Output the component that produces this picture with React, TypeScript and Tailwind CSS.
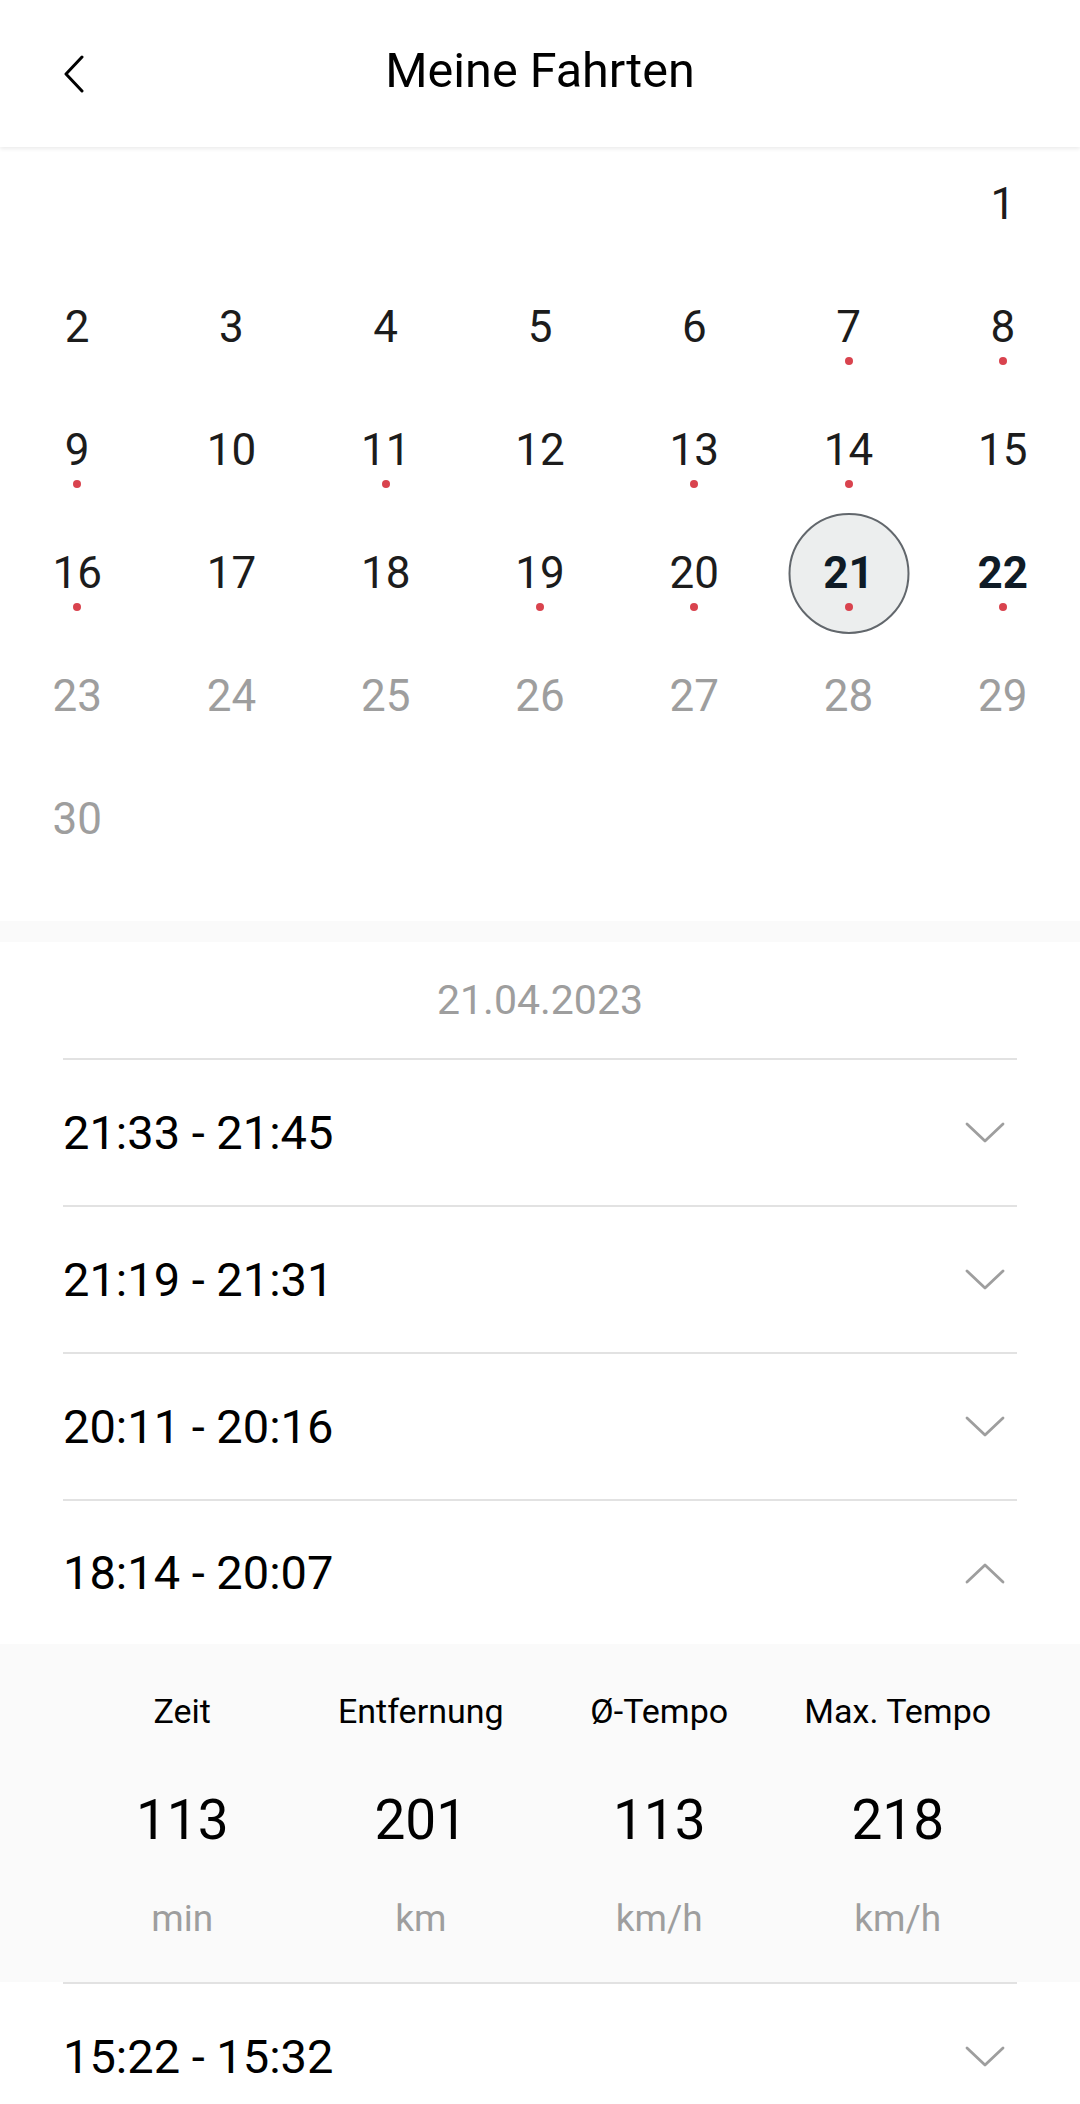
import React from 'react';

type Day = {
  n: number;
  dot?: boolean;
  muted?: boolean;
  bold?: boolean;
  selected?: boolean;
};

const dotted = [7, 8, 9, 11, 13, 14, 16, 19, 20, 21, 22];

const days: (Day | null)[] = [
  null, null, null, null, null, null,
  ...Array.from({ length: 30 }, (_, i) => {
    const n = i + 1;
    return {
      n,
      dot: dotted.includes(n),
      muted: n >= 23,
      bold: n === 21 || n === 22,
      selected: n === 21,
    };
  }),
];

const trips = ['21:33 - 21:45', '21:19 - 21:31', '20:11 - 20:16'];

const stats = [
  { label: 'Zeit', value: '113', unit: 'min' },
  { label: 'Entfernung', value: '201', unit: 'km' },
  { label: 'Ø-Tempo', value: '113', unit: 'km/h' },
  { label: 'Max. Tempo', value: '218', unit: 'km/h' },
];

const Chevron = ({ up = false }: { up?: boolean }) => (
  <svg width="40" height="22" viewBox="0 0 40 22" fill="none" className="shrink-0 mr-[12px]">
    <path
      d={up ? 'M2 20 L20 3 L38 20' : 'M2 2 L20 19 L38 2'}
      stroke="#9e9e9e"
      strokeWidth="2.8"
      strokeLinecap="round"
      strokeLinejoin="round"
    />
  </svg>
);

const TripRow = ({ time, open = false }: { time: string; open?: boolean }) => (
  <div className="mx-[63px] border-t-2 border-[#e2e2e2]">
    <div className={`flex items-center justify-between ${open ? 'h-[143px]' : 'h-[145px]'}`}>
      <span className="text-[47px] text-black leading-none">{time}</span>
      <Chevron up={open} />
    </div>
  </div>
);

export default function App() {
  return (
    <div className="w-[1080px] min-h-[2104px] bg-white overflow-hidden" style={{ fontFamily: 'Roboto, "Noto Sans", sans-serif' }}>
      {/* Header */}
      <header className="relative z-10 h-[147px] grid grid-cols-[1fr_auto_1fr] items-center bg-white shadow-[0_2px_4px_rgba(0,0,0,0.08)]">
        <div className="pl-[62px] flex items-center">
          <svg width="24" height="38" viewBox="0 0 24 38" fill="none">
            <path d="M20 2 L4 19 L20 36" stroke="#000" strokeWidth="3" strokeLinecap="round" strokeLinejoin="round" />
          </svg>
        </div>
        <h1 className="text-[48.5px] text-black leading-none pb-[4px]">Meine Fahrten</h1>
        <div />
      </header>

      {/* Calendar */}
      <div className="grid grid-cols-7 pb-[36px]">
        {days.map((d, i) => (
          <div key={i} className="relative h-[123px] flex flex-col items-center">
            {d && (
              <>
                {d.selected && (
                  <div className="absolute top-[-3px] left-1/2 -translate-x-1/2 w-[121px] h-[121px] rounded-full bg-[#eceeee] border-2 border-[#62676c]" />
                )}
                <div
                  className={`relative mt-[31px] h-[52px] flex items-center text-[44px] leading-none ${
                    d.bold ? 'font-bold text-[#0f1b26]' : d.muted ? 'text-[#9e9e9e]' : 'text-[#1c1c1c]'
                  }`}
                >
                  {d.n}
                </div>
                {d.dot && <div className="relative mt-[4px] w-[8px] h-[8px] rounded-full bg-[#d9434e]" />}
              </>
            )}
          </div>
        ))}
      </div>

      <div className="h-[21px] bg-[#fafafa]" />

      {/* Date */}
      <div className="h-[116px] flex items-center justify-center">
        <span className="text-[41px] text-[#9e9e9e] leading-none">21.04.2023</span>
      </div>

      {/* Trips */}
      {trips.map((t) => (
        <TripRow key={t} time={t} />
      ))}
      <TripRow time="18:14 - 20:07" open />

      <div className="h-[338px] bg-[#fafafa] px-[63px] grid grid-cols-4">
        {stats.map((s) => (
          <div key={s.label} className="flex flex-col items-center">
            <div className="h-[134px] flex items-center text-[34px] text-black leading-none">{s.label}</div>
            <div className="h-[84px] flex items-center text-[55px] text-black leading-none">{s.value}</div>
            <div className="h-[118px] flex items-center text-[37px] text-[#9e9e9e] leading-none pb-[5px]">{s.unit}</div>
          </div>
        ))}
      </div>

      <TripRow time="15:22 - 15:32" />
    </div>
  );
}
